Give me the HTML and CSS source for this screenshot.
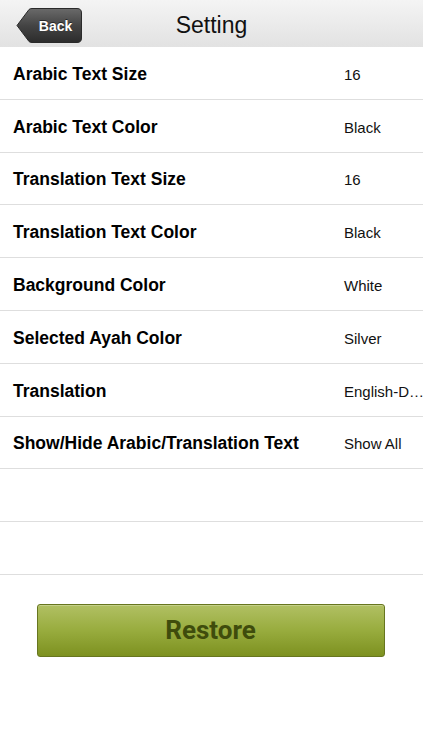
FILE: index.html
```
<!DOCTYPE html>
<html>
<head>
<meta charset="utf-8">
<link rel="stylesheet" href="styles.css">
</head>
<body>
<div class="app">
  <header class="navbar">
    <button class="back">
      <svg class="back-shape" width="66" height="35" viewBox="0 0 66 35">
        <defs>
          <linearGradient id="bg" x1="0" y1="0" x2="0" y2="1">
            <stop offset="0" stop-color="#6a6a6a"/>
            <stop offset="0.5" stop-color="#444"/>
            <stop offset="1" stop-color="#2c2c2c"/>
          </linearGradient>
        </defs>
        <path d="M1 17.5 L13 1.5 Q14 0.5 16 0.5 L61 0.5 Q65.5 0.5 65.5 5 L65.5 30 Q65.5 34.5 61 34.5 L16 34.5 Q14 34.5 13 33.5 Z" fill="url(#bg)" stroke="#2a2a2a" stroke-width="1"/>
      </svg>
      <span class="back-label">Back</span>
    </button>
    <h1 class="title">Setting</h1>
  </header>
  <ul class="list">
    <li class="row"><span class="label">Arabic Text Size</span><span class="value">16</span></li>
    <li class="row"><span class="label">Arabic Text Color</span><span class="value">Black</span></li>
    <li class="row"><span class="label">Translation Text Size</span><span class="value">16</span></li>
    <li class="row"><span class="label">Translation Text Color</span><span class="value">Black</span></li>
    <li class="row"><span class="label">Background Color</span><span class="value">White</span></li>
    <li class="row"><span class="label">Selected Ayah Color</span><span class="value">Silver</span></li>
    <li class="row"><span class="label">Translation</span><span class="value">English-D…</span></li>
    <li class="row"><span class="label">Show/Hide Arabic/Translation Text</span><span class="value">Show All</span></li>
    <li class="row"></li>
    <li class="row"></li>
  </ul>
  <div class="actions">
    <button class="restore">Restore</button>
  </div>
</div>
</body>
</html>
```
FILE: styles.css
```
* { box-sizing: border-box; }
html, body { margin: 0; padding: 0; background: #fff; }
body { font-family: "Liberation Sans", Arial, sans-serif; color: #000; }
.app { width: 423px; height: 750px; overflow: hidden; }
.navbar {
  height: 47px;
  background: linear-gradient(#f4f4f4, #e2e2e2);
  display: flex;
  align-items: center;
  position: relative;
}
.back {
  position: absolute;
  left: 16px;
  top: 8px;
  width: 66px;
  height: 35px;
  padding: 0;
  border: none;
  background: none;
}
.back-shape { display: block; }
.back-label {
  position: absolute;
  left: 13px;
  right: 0;
  top: 0;
  bottom: 0;
  display: flex;
  align-items: center;
  justify-content: center;
  color: #fff;
  font-family: "Liberation Sans", Arial, sans-serif;
  font-weight: bold;
  font-size: 14px;
  text-shadow: 0 -1px 0 rgba(0,0,0,0.5);
}
.title {
  margin: 0;
  width: 100%;
  text-align: center;
  font-weight: normal;
  font-size: 23px;
  color: #111;
  padding-top: 3px;
}
.list { list-style: none; margin: 0; padding: 0; }
.row {
  height: 52.8px;
  border-bottom: 1.5px solid #dedede;
  display: flex;
  align-items: center;
  padding-left: 13px;
  padding-top: 3px;
}
.label {
  flex: 0 0 331px;
  font-weight: bold;
  font-size: 17.5px;
  white-space: nowrap;
}
.value { font-size: 15px; color: #111; white-space: nowrap; }
.actions { display: flex; justify-content: center; padding-top: 29px; }
.restore {
  width: 348px;
  height: 53px;
  margin-left: -2px;
  border: 1px solid #67761f;
  border-radius: 3px;
  background: linear-gradient(#b1c063, #98ac3e 50%, #7d9120);
  font-family: Roboto, "Liberation Sans", sans-serif;
  font-weight: bold;
  font-size: 26px;
  color: #3f4c0c;
  padding: 0;
  box-shadow: inset 0 1px 0 rgba(255,255,255,0.25);
}
```
